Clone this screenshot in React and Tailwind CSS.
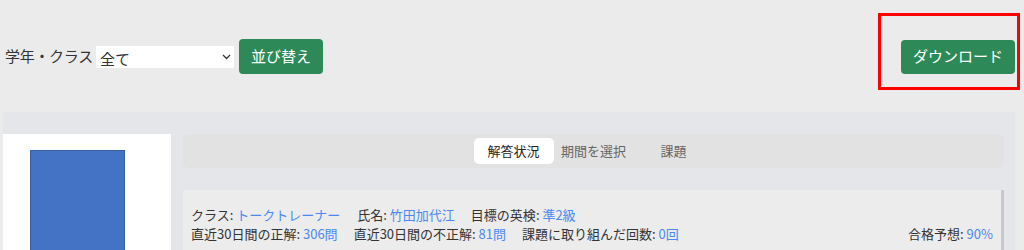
import React from "react";

const font = { fontFamily: '"Noto Sans CJK JP", "Noto Sans", sans-serif' };

function Item({ label, value, className = "" }) {
  return (
    <span className={`whitespace-nowrap ${className}`}>
      {label}: <span className="text-[#4a89f0]">{value}</span>
    </span>
  );
}

export default function App() {
  const tabs = ["解答状況", "期間を選択", "課題"];

  return (
    <div className="relative w-[1024px] h-[250px] overflow-hidden bg-[#ebebeb] text-[#333]" style={font}>
      {/* top controls */}
      <div className="flex items-center h-[35px] mt-[39px] pl-[5px] pr-[9px]">
        <span className="text-[15px] tracking-[-0.3px]">学年・クラス</span>
        <div className="relative ml-[3px] w-[138px] h-[22px] bg-white">
          <select className="appearance-none w-full h-full bg-transparent pl-[4px] text-[15px] leading-[22px] outline-none" style={font}>
            <option>全て</option>
          </select>
          <svg className="absolute right-[3px] top-[8px]" width="9" height="6" viewBox="0 0 9 6" fill="none">
            <path d="M1 1l3.5 3.5L8 1" stroke="#333" strokeWidth="1.3" />
          </svg>
        </div>
        <button className="ml-[5px] w-[84px] h-[35px] rounded-[4px] bg-[#2d8a58] text-white text-[15px]">並び替え</button>
        <button className="ml-auto w-[114px] h-[34px] rounded-[4px] bg-[#2d8a58] text-white text-[15px]">ダウンロード</button>
      </div>

      {/* annotation box */}
      <div className="absolute left-[878px] top-[13px] w-[142px] h-[77px] border-[3px] border-[#ff0000]" />

      {/* main panel */}
      <div className="mt-[38px] ml-[3px] w-[1012px] h-[200px] bg-[#e5e6e9] pt-[22px] flex gap-[12px]">
        <div className="w-[168px] h-[200px] bg-white pt-[16px] pl-[27px]">
          <div className="w-[95px] h-[120px] bg-[#4472c4] border border-[#3a5f9e]" />
        </div>
        <div className="flex-1 pr-[11px]">
          <div className="h-[34px] rounded-[6px] bg-[#e2e2e2] flex items-center justify-center">
            {tabs.map((t, i) => (
              <div
                key={t}
                className={`w-[80px] h-[26px] flex items-center justify-center text-[13px] rounded-[5px] ${
                  i === 0 ? "bg-white text-[#222]" : "text-[#666]"
                }`}
              >
                {t}
              </div>
            ))}
          </div>
          <div className="mt-[22px] h-[100px] bg-[#ececec] border-r-[3px] border-[#c8c8c8] pl-[8px] pr-[8px] pt-[15px] text-[13px] leading-[19px]">
            <div className="flex">
              <Item label="クラス" value="トークトレーナー" className="mr-[17px]" />
              <Item label="氏名" value="竹田加代江" className="mr-[16px]" />
              <Item label="目標の英検" value="準2級" />
            </div>
            <div className="flex">
              <Item label="直近30日間の正解" value="306問" className="mr-[16px]" />
              <Item label="直近30日間の不正解" value="81問" className="mr-[16px]" />
              <Item label="課題に取り組んだ回数" value="0回" />
              <Item label="合格予想" value="90%" className="ml-auto" />
            </div>
          </div>
        </div>
      </div>
    </div>
  );
}
